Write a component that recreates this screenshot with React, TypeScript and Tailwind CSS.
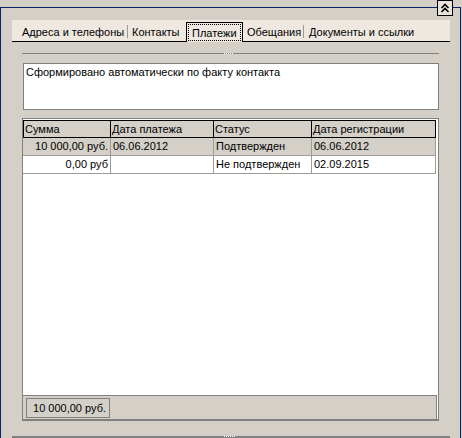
import React from 'react'

const cols = [
  { title: 'Сумма', w: 'w-[88px]' },
  { title: 'Дата платежа', w: 'w-[103px]' },
  { title: 'Статус', w: 'w-[98px]' },
  { title: 'Дата регистрации', w: 'w-[124px]' },
]

const payments = [
  { sum: '10 000,00 руб.', date: '06.06.2012', status: 'Подтвержден', reg: '06.06.2012', bg: 'bg-[#d4d0c8]' },
  { sum: '0,00 руб', date: '', status: 'Не подтвержден', reg: '02.09.2015', bg: 'bg-white' },
]

function CollapseButton() {
  return (
    <div className="absolute left-[437px] top-0 z-10 flex h-[16px] w-[16px] items-center justify-center border border-black bg-[#e8e4dc]">
      <svg width="14" height="14" viewBox="0 0 14 14" fill="none" stroke="black" strokeWidth="1.6">
        <polyline points="3.5,7 7,3.5 10.5,7" />
        <polyline points="3.5,11 7,7.5 10.5,11" />
      </svg>
    </div>
  )
}

function Separator() {
  return <div className="mb-[3px] h-[13px] w-px self-end bg-[#9c978f]" />
}

function Tabs() {
  return (
    <div className="flex h-[22px] w-[438px] items-end border-b border-black bg-[#eee8e0]">
      <div className="h-[20px] w-[115px] pl-[10px] pt-[3px] leading-[17px]">Адреса и телефоны</div>
      <Separator />
      <div className="h-[20px] w-[58px] pl-[4px] pt-[3px] leading-[17px]">Контакты</div>
      {/* active tab */}
      <div className="relative top-px h-[20px] w-[57px] border-x border-t border-black bg-[#eee8e0]">
        <div className="m-px h-[17px] border border-dotted border-black pl-[3px] pt-px leading-[15px]">Платежи</div>
      </div>
      <div className="h-[20px] w-[60px] pl-[4px] pt-[3px] leading-[17px]">Обещания</div>
      <Separator />
      <div className="h-[20px] flex-1 pl-[5px] pt-[3px] leading-[17px]">Документы и ссылки</div>
    </div>
  )
}

function Grid() {
  return (
    <div className="mt-[8px] flex h-[303px] w-[417px] flex-col border border-b-2 border-[#808080] bg-white">
      <div className="mt-px flex h-[18px] w-[413px] border-y border-black bg-[#d4d0c8]">
        {cols.map((c, i) => (
          <div key={c.title} className={`${c.w} border-r border-black pl-px leading-[16px] ${i === 0 ? 'border-l' : ''}`}>
            {c.title}
          </div>
        ))}
      </div>
      {payments.map((p) => (
        <div key={p.reg} className={`flex h-[18px] w-[413px] border-b border-[#a09c94] ${p.bg}`}>
          <div className="w-[88px] border-r border-[#a09c94] pr-[2px] text-right leading-[17px]">{p.sum}</div>
          <div className="w-[103px] border-r border-[#a09c94] pl-[2px] leading-[17px]">{p.date}</div>
          <div className="w-[98px] border-r border-[#a09c94] pl-[2px] leading-[17px]">{p.status}</div>
          <div className="w-[124px] border-r border-[#a09c94] pl-[2px] leading-[17px]">{p.reg}</div>
        </div>
      ))}
      <div className="flex-1" />
      <div className="h-[24px] w-[414px] border-r border-t border-[#808080] bg-[#d4d0c8] pl-[3px] pt-[2px]">
        <div className="h-[20px] w-[84px] border border-[#808080] pr-[3px] text-right leading-[18px]">10 000,00 руб.</div>
      </div>
    </div>
  )
}

export default function App() {
  return (
    <div className="relative h-[438px] w-[462px] overflow-hidden bg-[#d4d0c8] pt-[7px] font-['Liberation_Sans',Arial,sans-serif] text-[11px] text-black">
      <CollapseButton />
      <div className="flex h-[431px] w-[461px] flex-col border-x border-t border-[#0a246a] pl-[11px] pt-[12px]">
        <Tabs />
        <div className="flex flex-col pl-[10px]">
          {/* splitter line */}
          <div className="relative mt-[11px] h-px w-[417px] bg-[#808080]">
            <div className="absolute left-[202px] top-0 h-px w-[9px] border-t border-dotted border-white" />
          </div>
          <div className="ml-px mt-[9px] h-[47px] w-[416px] border border-[#808080] bg-white px-[2px] pt-[2px] leading-[13px]">
            Сформировано автоматически по факту контакта
          </div>
          <Grid />
        </div>
        <div className="relative mt-[15px] h-[2px] w-[438px] bg-[#808080]">
          <div className="absolute left-[212px] top-0 h-px w-[11px] border-t border-dotted border-white" />
        </div>
      </div>
    </div>
  )
}
